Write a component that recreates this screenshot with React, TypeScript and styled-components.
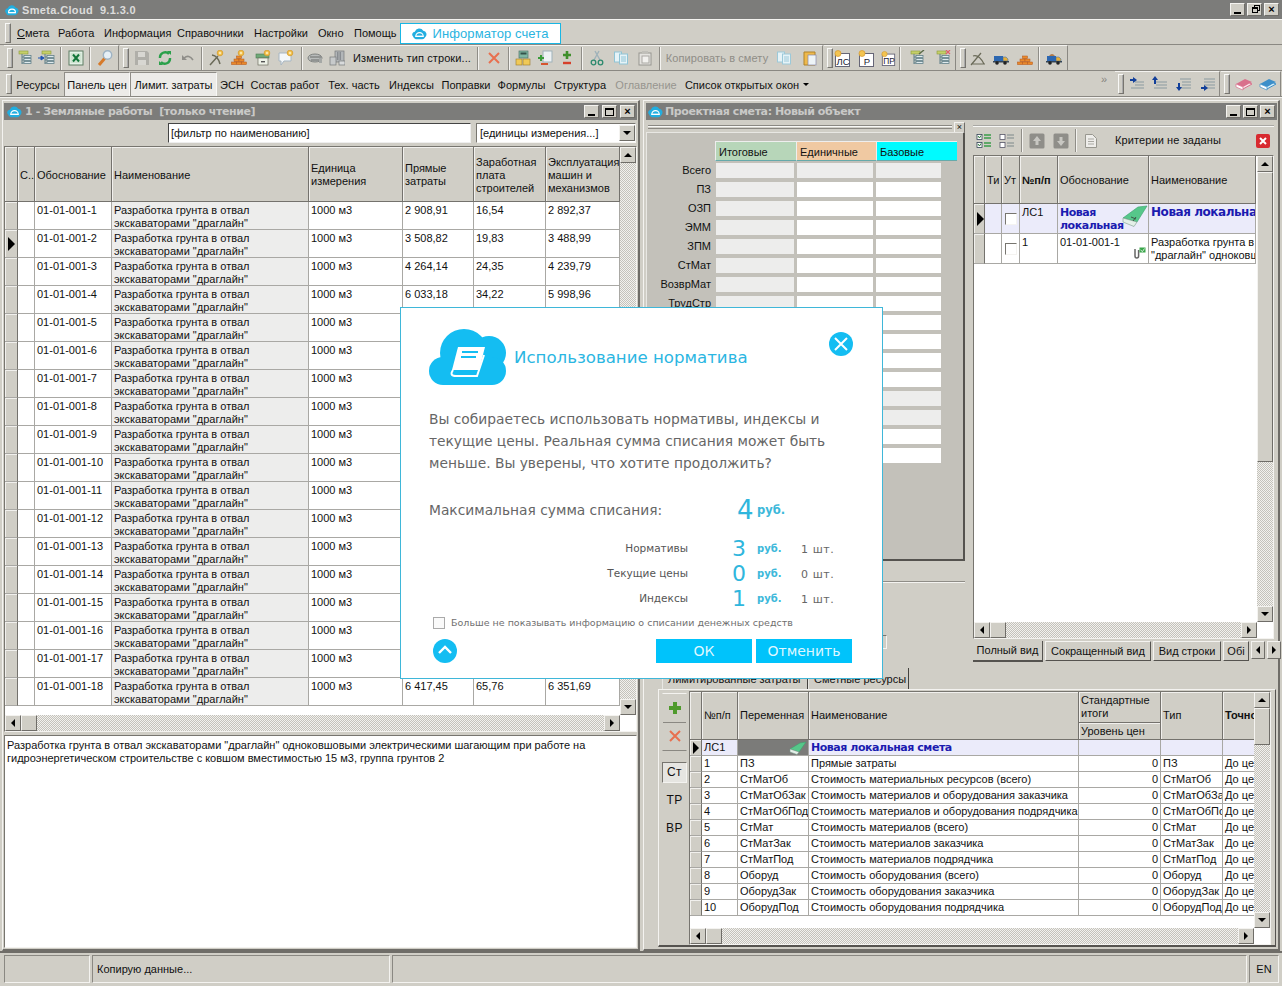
import * as React from "react";
import styled, { createGlobalStyle, css } from "styled-components";

const UI_FONT = `"Liberation Sans", Arial, sans-serif`;
const DIALOG_FONT = `"DejaVu Sans", Verdana, sans-serif`;
const FACE = "#d0cec6";
const DITHER = css`
	background-color: #f2f1ee;
	background-image: repeating-conic-gradient(#c4c2bb 0 25%, transparent 0 50%);
	background-size: 2px 2px;
`;
const raised = css`
	border: 1px solid;
	border-color: #f4f3f0 #6f6d68 #6f6d68 #f4f3f0;
`;
const sunken = css`
	border: 1px solid;
	border-color: #77756f #f4f3f0 #f4f3f0 #77756f;
`;

const GlobalStyle = createGlobalStyle`
	html, body { margin: 0; padding: 0; background: ${FACE}; }
	* { box-sizing: border-box; }
`;

const Screen = styled.div`
	width: 1282px;
	height: 986px;
	position: relative;
	overflow: hidden;
	display: flex;
	flex-direction: column;
	background: ${FACE};
	font: 11px/13px ${UI_FONT};
	color: #111;
`;

/* title bars */
const AppTitle = styled.div`
	height: 19px;
	flex: none;
	background: #7c7c7a;
	display: flex;
	align-items: center;
	padding: 0 3px 0 5px;
	gap: 3px;
	color: #dcdcdc;
	font: bold 11px ${UI_FONT};
`;
const AppTitleText = styled.span`
	flex: 1;
	white-space: pre;
	letter-spacing: 0.35px;
`;
const CaptionButtons = styled.div`
	display: flex;
	gap: 2px;
`;
const CaptionButton = styled.div`
	width: 15px;
	height: 13px;
	background: ${FACE};
	${raised};
	display: flex;
	align-items: center;
	justify-content: center;
	color: #000;
	font: bold 11px/11px ${UI_FONT};
`;
const MinGlyph = styled.span`
	width: 7px;
	height: 2px;
	background: #000;
	margin-top: 6px;
`;
const MaxGlyph = styled.span`
	width: 9px;
	height: 8px;
	border: 1px solid #000;
	border-top-width: 2px;
`;
const RestoreGlyph = styled(MaxGlyph)`
	width: 6px;
	height: 6px;
	box-shadow: 2px -2px 0 -1px ${FACE}, 2px -2px 0 0 #000;
`;

const WinCaption = styled.div`
	height: 17px;
	flex: none;
	background: #7c7c7a;
	display: flex;
	align-items: center;
	gap: 2px;
	padding: 0 2px;
	color: #c9c9c7;
	font: bold 11px ${DIALOG_FONT};
`;
const LeftCaption = styled(WinCaption)`
	padding-left: 3px;
	gap: 3px;
`;
const WinCaptionText = styled.span`
	flex: 1;
	white-space: pre;
	letter-spacing: -0.4px;
`;

/* menu and toolbars */
const MenuBar = styled.div`
	height: 26px;
	flex: none;
	display: flex;
	align-items: center;
	border-top: 1px solid #f4f3f0;
	border-bottom: 1px solid #8a8882;
	padding: 2px 0 0 5px;
`;
const Grip = styled.div`
	width: 6px;
	height: 20px;
	flex: none;
	border: 1px solid;
	border-color: #f8f8f6 #77756f #77756f #f8f8f6;
	outline: 0;
	box-shadow: inset 1px 0 0 ${FACE}, inset -1px 0 0 #aaa;
`;
const MenuItem = styled.span`
	margin-left: 6px;
	margin-right: 4px;
	width: ${(p: { $w: number }) => p.$w}px;
	white-space: nowrap;
	flex: none;
`;
const Underlined = styled.span`
	text-decoration: underline;
`;
const Informer = styled.div`
	width: 161px;
	height: 21px;
	margin-left: 2px;
	flex: none;
	display: flex;
	align-items: center;
	justify-content: center;
	gap: 5px;
	background: #fff;
	border: 1px solid #19b6e4;
	color: #2ab4df;
	font: 13px ${UI_FONT};
	letter-spacing: 0.1px;
`;
const ToolRow = styled.div`
	height: 26px;
	flex: none;
	display: flex;
	padding-left: ${(p: { $pad?: number }) => p.$pad ?? 4}px;
	border-bottom: 1px solid #8a8882;
`;
const Band = styled.div<{ $at?: number }>`
	display: flex;
	align-items: center;
	height: 25px;
	flex: none;
	margin-right: 1px;
	border-top: 1px solid #f4f3f0;
	border-right: 1px solid #8a8882;
	margin-left: ${(p) => p.$at ?? 0}px;
`;
const Slot = styled.div<{ $w: number }>`
	width: ${(p) => p.$w}px;
	flex: none;
	display: flex;
	align-items: center;
	justify-content: center;
`;
const BandGrip = styled(Grip)`
	margin-right: auto;
	margin-left: 3px;
`;
const Divider = styled.div`
	width: 2px;
	height: 23px;
	border-left: 1px solid #8f8d87;
	border-right: 1px solid #f4f3f0;
`;
const ToolText = styled.span<{ $dim?: boolean }>`
	white-space: nowrap;
	color: ${(p) => (p.$dim ? "#8f8d87" : "#111")};
	letter-spacing: 0.1px;
`;
const LinkButton = styled.div<{ $w: number; $pressed?: boolean; $dim?: boolean }>`
	width: ${(p) => p.$w}px;
	height: 24px;
	margin-top: 1px;
	padding-top: 2px;
	flex: none;
	display: flex;
	align-items: center;
	justify-content: center;
	gap: 4px;
	white-space: nowrap;
	color: ${(p) => (p.$dim ? "#97958f" : "#111")};
	${(p) =>
		p.$pressed &&
		css`
			background: #ecebe8;
			border-left: 1px solid #8f8d87;
			border-top: 1px solid #8f8d87;
			border-right: 1px solid #f8f8f6;
		`}
`;
const Caret = styled.span`
	width: 0;
	height: 0;
	border-left: 3px solid transparent;
	border-right: 3px solid transparent;
	border-top: 3px solid #000;
	margin-bottom: 2px;
`;
const Spacer = styled.div`
	flex: 1;
`;
const Chevron = styled.span`
	align-self: flex-start;
	margin-top: 2px;
	width: 14px;
	color: #85837d;
	font-size: 11px;
`;

/* MDI */
const Desktop = styled.div`
	height: 854px;
	flex: none;
	display: flex;
	gap: 3px;
	padding: 2px 2px 0 2px;
	border-top: 1px solid #f4f3f0;
`;
const Win = styled.div`
	flex: 1;
	min-width: 0;
	display: flex;
	flex-direction: column;
	padding: 2px 1px 1px 2px;
	${raised};
	border-width: 1px 2px 2px 1px;
`;
const LeftWin = styled(Win)`
	flex: none;
	width: 638px;
	padding-left: 1px;
`;
const FilterBar = styled.div`
	height: 26px;
	flex: none;
	display: flex;
	align-items: center;
	padding-left: 164px;
	gap: 5px;
`;
const FilterInput = styled.div`
	width: 303px;
	height: 20px;
	background: #fff;
	border: 1px solid;
	border-color: #444 #eee #eee #444;
	padding: 3px 2px 0;
	white-space: nowrap;
`;
const ComboBox = styled.div`
	width: 160px;
	height: 20px;
	background: #fff;
	${sunken};
	display: flex;
	align-items: center;
	padding-left: 3px;
	justify-content: space-between;
`;
const GridFrame = styled.div<{ $h: number }>`
	height: ${(p) => p.$h}px;
	flex: none;
	display: flex;
	flex-direction: column;
	${sunken};
	background: #fff;
`;
const GridMain = styled.div`
	flex: 1;
	min-height: 0;
	display: flex;
`;
const GridBody = styled.div`
	flex: 1;
	min-width: 0;
	overflow: hidden;
	display: flex;
	flex-direction: column;
`;
const GridRow = styled.div<{ $cols: string; $h: number }>`
	display: grid;
	grid-template-columns: ${(p) => p.$cols};
	height: ${(p) => p.$h}px;
	flex: none;
`;
const HeadCell = styled.div<{ $bold?: boolean }>`
	background: ${FACE};
	border-right: 1px solid #74726d;
	border-bottom: 1px solid #74726d;
	box-shadow: inset 1px 1px 0 #f1f0ed;
	display: flex;
	align-items: center;
	padding: 0 2px;
	white-space: pre-line;
	overflow: hidden;
	font-weight: ${(p) => (p.$bold ? "bold" : "normal")};
`;
const TallHead = styled(HeadCell)`
	padding-top: 2px;
`;
const StackHead = styled.div`
	display: grid;
	grid-template-rows: 31px 1fr;
`;
const Cell = styled.div<{ $grey?: boolean; $right?: boolean; $dark?: boolean; $lav?: boolean }>`
	background: ${(p) => (p.$dark ? "#7b7b79" : p.$grey ? "#ededec" : p.$lav ? "#ebebfa" : "#fff")};
	border-right: 1px solid #a9a8a4;
	border-bottom: 1px solid #a9a8a4;
	padding: 1px 2px;
	white-space: pre-line;
	overflow: hidden;
	position: relative;
	text-align: ${(p) => (p.$right ? "right" : "left")};
`;
const TallCell = styled(Cell)`
	padding-top: 2px;
`;
const Clip = styled.span`
	white-space: nowrap;
`;
const RowMark = styled.div`
	background: ${FACE};
	border-right: 1px solid #74726d;
	border-bottom: 1px solid #a9a8a4;
	box-shadow: inset 1px 1px 0 #f1f0ed;
	display: flex;
	align-items: center;
	padding-left: 3px;
`;
const Pointer = styled.span`
	width: 0;
	height: 0;
	border-left: 7px solid #000;
	border-top: 7px solid transparent;
	border-bottom: 7px solid transparent;
`;
const SmallPointer = styled(Pointer)`
	border-left-width: 6px;
	border-top-width: 6px;
	border-bottom-width: 6px;
`;
const BlueBold = styled.span<{ $size?: number }>`
	color: #1b1bb0;
	font: bold ${(p) => p.$size ?? 11}px/13px ${DIALOG_FONT};
	white-space: nowrap;
	letter-spacing: -0.45px;
`;
const CellBox = styled.span`
	display: block;
	width: 12px;
	height: 12px;
	margin: 7px 0 0 1px;
	background: #fff;
	${sunken};
`;
const CornerIcon = styled.span<{ $bottom?: number; $top?: number; $right?: number }>`
	position: absolute;
	right: ${(p) => p.$right ?? 1}px;
	${(p) => (p.$top !== undefined ? `top:${p.$top}px;` : `bottom:${p.$bottom ?? 0}px;`)}
	display: flex;
`;

/* scrollbars */
const VBar = styled.div`
	width: 16px;
	flex: none;
	display: flex;
	flex-direction: column;
	${DITHER};
`;
const HBar = styled.div<{ $gutter: number }>`
	height: 16px;
	flex: none;
	display: flex;
	margin-right: ${(p) => p.$gutter}px;
	${DITHER};
`;
const BarFill = styled.div`
	flex: 1;
`;
const BarButton = styled.div<{ $len?: number }>`
	background: ${FACE};
	${raised};
	flex: none;
	width: ${(p) => p.$len ?? 16}px;
	height: 16px;
	display: flex;
	align-items: center;
	justify-content: center;
`;
const BarThumb = styled.div<{ $len: number }>`
	background: ${FACE};
	${raised};
	flex: none;
	width: 16px;
	height: ${(p) => p.$len}px;
`;
const Arrow = styled.span<{ $dir: "up" | "down" | "left" | "right" }>`
	width: 0;
	height: 0;
	${(p) =>
		p.$dir === "up"
			? "border-left:4px solid transparent;border-right:4px solid transparent;border-bottom:4px solid #000;"
			: p.$dir === "down"
				? "border-left:4px solid transparent;border-right:4px solid transparent;border-top:4px solid #000;"
				: p.$dir === "left"
					? "border-top:4px solid transparent;border-bottom:4px solid transparent;border-right:4px solid #000;"
					: "border-top:4px solid transparent;border-bottom:4px solid transparent;border-left:4px solid #000;"}
`;

const Memo = styled.div`
	flex: 1;
	margin-top: 3px;
	background: #fff;
	${sunken};
	padding: 3px 2px;
	line-height: 13px;
`;

/* right window */
const RightBody = styled.div`
	flex: 1;
	min-height: 0;
	display: flex;
	flex-direction: column;
	padding-top: 2px;
`;
const TopSplit = styled.div`
	height: 539px;
	flex: none;
	display: flex;
	gap: 8px;
`;
const SummaryColumn = styled.div`
	width: 319px;
	flex: none;
	display: flex;
	flex-direction: column;
`;
const DockHead = styled.div`
	height: 10px;
	flex: none;
	display: flex;
	align-items: center;
	gap: 2px;
	padding-left: 2px;
`;
const DockLines = styled.div`
	flex: 1;
	height: 4px;
	border-top: 1px solid #8a8882;
	border-bottom: 1px solid #8a8882;
	box-shadow: inset 0 1px 0 #f8f8f6;
`;
const DockClose = styled.div`
	width: 11px;
	height: 11px;
	${raised};
	display: flex;
	align-items: center;
	justify-content: center;
	font-size: 9px;
	line-height: 9px;
`;
const SummaryPanel = styled.div`
	height: 429px;
	flex: none;
	background: #c3c1ba;
	border: 1px solid;
	border-color: #e8e7e3 #55534f #55534f #e8e7e3;
	border-width: 1px 2px 2px 1px;
	padding: 8px 0 0 69px;
`;
const SummaryHead = styled.div`
	display: grid;
	grid-template-columns: 81px 80px 81px;
	height: 20px;
	margin: 0 0 2px -1px;
`;
const ColumnTitle = styled.div<{ $bg: string }>`
	background: ${(p) => p.$bg};
	border-bottom: 1px solid #6aa;
	border-left: 1px solid #eee;
	border-top: 1px solid #eee;
	padding: 4px 3px 0;
`;
const SummaryRow = styled.div`
	display: grid;
	grid-template-columns: 67px 78px 76px 65px;
	column-gap: 3px;
	height: 19px;
	margin-left: -70px;
	align-items: start;
`;
const SummaryLabel = styled.div`
	text-align: right;
	line-height: 15px;
	padding-right: 2px;
`;
const SummaryField = styled.div<{ $grey?: boolean }>`
	height: 15px;
	background: ${(p) => (p.$grey ? "#ededec" : "#fff")};
`;
const SummaryFoot = styled.div`
	flex: 1;
	margin-top: 2px;
	display: flex;
	flex-direction: column;
	align-items: flex-end;
`;
const FootLine = styled.div`
	width: 100%;
	height: 2px;
	margin-top: 18px;
	border-top: 1px solid #8f8d87;
	border-bottom: 1px solid #f4f3f0;
`;
const FootBox = styled.div`
	width: 80px;
	height: 14px;
	margin-top: 52px;
	margin-right: 78px;
	${sunken};
`;
const StructureColumn = styled.div`
	flex: 1;
	min-width: 0;
	display: flex;
	flex-direction: column;
	padding-top: 3px;
	padding-right: 3px;
`;
const FilterTools = styled.div`
	height: 30px;
	flex: none;
	display: flex;
	align-items: center;
	border-top: 1px solid #a9a8a4;
	box-shadow: inset 0 1px 0 #f8f8f6;
`;
const TabStrip = styled.div`
	height: 24px;
	flex: none;
	display: flex;
	align-items: flex-start;
	padding-top: 2px;
`;
const ViewTab = styled.div<{ $w: number; $active?: boolean }>`
	width: ${(p) => p.$w}px;
	flex: none;
	height: ${(p) => (p.$active ? 21 : 20)}px;
	display: flex;
	align-items: center;
	justify-content: center;
	margin-right: 2px;
	white-space: nowrap;
	overflow: hidden;
	${(p) =>
		p.$active
			? "border-bottom:2px solid #55534f;border-right:1px solid #55534f;"
			: "border:1px solid;border-color:#f4f3f0 #55534f #55534f #f4f3f0;"}
`;
const TabArrow = styled(BarButton)`
	width: 14px;
	height: 18px;
	margin-right: 2px;
`;
const BottomPart = styled.div`
	flex: 1;
	min-height: 0;
	display: flex;
	flex-direction: column;
	padding: 7px 1px 0 12px;
`;
const SheetTabs = styled.div`
	height: 21px;
	flex: none;
	display: flex;
	padding-left: 4px;
`;
const SheetTab = styled.div<{ $w: number }>`
	width: ${(p) => p.$w}px;
	flex: none;
	padding: 5px 3px 0 5px;
	white-space: nowrap;
	border-right: 1px solid #44423e;
	border-left: 1px solid #e8e7e3;
	overflow: hidden;
`;
const SheetBody = styled.div`
	height: 258px;
	flex: none;
	display: flex;
	padding: 1px 4px 0 3px;
	border: 1px solid;
	border-color: #f4f3f0 #55534f #55534f #f4f3f0;
	border-width: 1px 1px 2px 1px;
`;
const SideBar = styled.div`
	width: 27px;
	flex: none;
	display: flex;
	flex-direction: column;
	align-items: center;
	font-size: 12px;
`;
const SideButtons = styled.div`
	width: 25px;
	height: 58px;
	flex: none;
	display: flex;
	flex-direction: column;
	margin: 2px 2px 0 0;
	border: 1px solid;
	border-color: #f4f3f0 transparent #8a8882 transparent;
`;
const SideButton = styled.div`
	flex: 1;
	display: flex;
	align-items: center;
	justify-content: center;
	&:first-child {
		border-bottom: 1px solid #8a8882;
	}
`;
const SideTab = styled.div<{ $on?: boolean }>`
	width: 25px;
	height: ${(p) => (p.$on ? 21 : 28)}px;
	margin: ${(p) => (p.$on ? "11px 2px 0 0" : "0 2px 0 0")};
	display: flex;
	align-items: center;
	justify-content: center;
	letter-spacing: 0.4px;
	${(p) => p.$on && "background:#e6e5e1;border:1px solid;border-color:#77756f #f4f3f0 #f4f3f0 #77756f;"}
	${(p) => !p.$on && "padding-top:6px;"}
`;
const RatesFrame = styled.div`
	flex: 1;
	min-width: 0;
	height: 254px;
	display: flex;
	flex-direction: column;
	background: #fff;
	${sunken};
`;

/* status bar */
const StatusBar = styled.div`
	flex: 1;
	display: flex;
	gap: 2px;
	padding: 2px 3px 3px 4px;
	border-top: 2px solid #6f6d68;
`;
const StatusPane = styled.div<{ $w?: number; $center?: boolean }>`
	${(p) => (p.$w ? `width:${p.$w}px;flex:none;` : "flex:1;")}
	${sunken};
	border-color: #8a8882 #f4f3f0 #f4f3f0 #8a8882;
	display: flex;
	align-items: center;
	padding-left: 4px;
	${(p) => p.$center && "justify-content:center;padding-left:0;"}
`;

/* dialog */
const Dialog = styled.div`
	position: absolute;
	left: 400px;
	top: 307px;
	width: 483px;
	height: 372px;
	background: #fff;
	border: 1px solid #3fb7d9;
	padding: 21px 30px 0 28px;
	display: flex;
	flex-direction: column;
	font-family: ${DIALOG_FONT};
	color: #666;
	z-index: 5;
`;
const DialogHead = styled.div`
	height: 57px;
	flex: none;
	display: flex;
	align-items: center;
	gap: 7px;
`;
const DialogTitle = styled.div`
	flex: 1;
	color: #2bb6e2;
	font-size: 16.6px;
`;
const RoundButton = styled.div<{ $shift?: number; $edge?: number }>`
	width: 24px;
	height: 24px;
	flex: none;
	border-radius: 50%;
	background: #14bdf2;
	display: flex;
	align-items: center;
	justify-content: center;
	margin-top: ${(p) => p.$shift ?? 0}px;
	margin-right: ${(p) => p.$edge ?? 0}px;
`;
const DialogText = styled.div`
	margin-top: 22px;
	font-size: 13.8px;
	line-height: 22px;
	white-space: pre-line;
`;
const TotalRow = styled.div`
	margin-top: 21px;
	height: 30px;
	display: grid;
	grid-template-columns: 308px 20px auto;
	align-items: center;
	font-size: 13.8px;
`;
const BigNumber = styled.span<{ $size: number }>`
	color: #2fb6dd;
	font-size: ${(p) => p.$size}px;
	line-height: 24px;
`;
const BreakNumber = styled(BigNumber)`
	text-align: right;
`;
const Rub = styled.span<{ $size: number }>`
	color: #3cb8da;
	font-size: ${(p) => p.$size}px;
	font-weight: bold;
`;
const BreakRub = styled(Rub)`
	padding-left: 11px;
`;
const Breakdown = styled.div`
	margin-top: 11px;
	display: flex;
	flex-direction: column;
`;
const BreakRow = styled.div`
	height: 25px;
	display: grid;
	grid-template-columns: 259px 58px 55px auto;
	align-items: center;
	font-size: 11px;
`;
const BreakLabel = styled.span`
	text-align: right;
	font-size: 10.5px;
	font-weight: 500;
	color: #555;
`;
const BreakCount = styled.span`
	letter-spacing: 0.6px;
	margin-top: 2px;
`;
const CheckLine = styled.div`
	margin-top: 3px;
	display: flex;
	align-items: center;
	gap: 6px;
	padding-left: 4px;
	font-size: 9.5px;
	color: #6f6f6f;
	height: 17px;
	white-space: nowrap;
`;
const CheckBox = styled.span`
	width: 12px;
	height: 12px;
	flex: none;
	border: 1px solid #aaa;
	background: #fafafa;
`;
const DialogFoot = styled.div`
	margin-top: 8px;
	display: flex;
	align-items: center;
	padding-left: 4px;
	gap: 4px;
`;
const FootGap = styled.div`
	flex: 1;
`;
const DialogButton = styled.div`
	width: 96px;
	height: 24px;
	background: #00c3fb;
	color: #dff7ff;
	display: flex;
	align-items: center;
	justify-content: center;
	font-size: 14px;
`;

/* icons */
const Svg: React.FC<{ size?: number; w?: number; children: React.ReactNode }> = ({ size = 16, w, children }) => (
	<svg width={w ?? size} height={size} viewBox={`0 0 ${w ?? size} ${size}`} style={{ display: "block" }}>
		{children}
	</svg>
);
const Star = ({ x = 11, y = 3 }: { x?: number; y?: number }) => (
	<g>
		<circle cx={x} cy={y} r={2.8} fill="#f3c451" stroke="#d59a2c" strokeWidth="0.8" />
		<circle cx={x} cy={y} r={0.9} fill="#fff6d5" />
	</g>
);
const TreeBase = () => (
	<g>
		<rect x="2" y="1" width="9" height="3" fill="#c5cf6a" stroke="#8b9a3a" strokeWidth="0.6" />
		<path d="M5 4v10M5 7h2M5 10h2M5 13h2" stroke="#5f7f88" fill="none" />
		<g fill="#dfeaee" stroke="#5f7f88" strokeWidth="0.8">
			<rect x="7" y="5.5" width="7" height="2" />
			<rect x="7" y="8.5" width="7" height="2" />
			<rect x="7" y="11.5" width="7" height="2" />
		</g>
	</g>
);
const Brick = ({ x, y, c = "#e98a2c" }: { x: number; y: number; c?: string }) => (
	<rect x={x} y={y} width="5" height="2.6" fill={c} stroke="#b4541a" strokeWidth="0.5" />
);
const Bricks = () => (
	<g>
		<Brick x={5.5} y={6} />
		<Brick x={3} y={9} />
		<Brick x={8} y={9} />
		<Brick x={0.5} y={12} />
		<Brick x={5.5} y={12} />
		<Brick x={10.5} y={12} />
	</g>
);
const Truck = ({ load }: { load?: boolean }) => (
	<g>
		{load && <path d="M3 6q3-4 6 0z" fill="#b07a4a" />}
		<rect x="1" y="6" width="9" height="5" fill="#2d67b0" />
		<path d="M10 7h3l2 2v2h-5z" fill="#e8b03a" stroke="#2d67b0" strokeWidth="0.5" />
		<rect x="0" y="11" width="16" height="1.5" fill="#345" />
		<circle cx="4" cy="13" r="1.8" fill="#222" />
		<circle cx="12" cy="13" r="1.8" fill="#222" />
	</g>
);
const Pages = ({ c = "#8fc4d6" }: { c?: string }) => (
	<g>
		<rect x="1.5" y="2" width="7" height="10" fill="#e6f3f7" stroke={c} />
		<rect x="6.5" y="4" width="8" height="10" fill="#e6f3f7" stroke={c} />
		<path d="M8 7h5M8 9h5M8 11h5" stroke={c} />
	</g>
);
const TagDoc = ({ text }: { text: string }) => (
	<svg width="17" height="17" viewBox="0 0 17 17" style={{ display: "block" }}>
		<rect x="1.5" y="3.5" width="14" height="13" fill="#fff" stroke="#667" />
		<circle cx="4" cy="3.5" r="3" fill="#f3c451" stroke="#d59a2c" strokeWidth="0.7" />
		<text x="9" y="14.5" textAnchor="middle" fontFamily={UI_FONT} fontSize="9.5" fill="#223">
			{text}
		</text>
	</svg>
);
const Indent = ({ mode }: { mode: number }) => (
	<Svg>
		<g stroke="#8a9aa0" strokeWidth="1">
			<line x1={mode % 2 ? 4 : 6} x2="15" y1="6" y2="6" />
			<line x1={mode % 2 ? 4 : 6} x2="15" y1="9" y2="9" />
			<line x1={mode < 2 ? 2 : 4} x2="15" y1="12" y2="12" />
			<line x1={mode < 2 ? 2 : 4} x2="15" y1="3" y2="3" opacity={mode < 2 ? 0 : 1} />
		</g>
		<g stroke="#123f9a" strokeWidth="2" fill="none">
			{mode === 0 && <path d="M1 4h5" />}
			{mode === 1 && <path d="M3 8V3" />}
			{mode === 2 && <path d="M3 7v5" />}
			{mode === 3 && <path d="M1 12h4" />}
		</g>
		<g fill="#123f9a">
			{mode === 0 && <path d="M4 1l4 3-4 3z" />}
			{mode === 1 && <path d="M3 0l3 4H0z" />}
			{mode === 2 && <path d="M3 15l3-4H0z" />}
			{mode === 3 && <path d="M4 9l4 3-4 3z" />}
		</g>
	</Svg>
);
const Book = ({ cover, page }: { cover: string; page: string }) => (
	<Svg w={18}>
		<path d="M1 10l9-5 7 3-9 5z" fill={page} stroke={cover} />
		<path d="M1 8l9-5 7 3-9 5z" fill={cover} />
		<path d="M1 8v3l7 3v-3z" fill="#fff" stroke={cover} strokeWidth="0.7" />
	</Svg>
);
const NoteGreen = () => (
	<Svg size={23} w={26}>
		<path d="M1 13L16 2l9-1-10 16z" fill="#56c78a" stroke="#38a06a" strokeWidth="0.6" />
		<path d="M1 13l14 4-3 4.5L1 17z" fill="#e4efe8" stroke="#7a9a8a" strokeWidth="0.6" />
		<path d="M9 12l5 2M11 16l3-4" stroke="#3a4a40" strokeWidth="0.9" />
	</Svg>
);
const SmallNote = () => (
	<Svg size={14} w={18}>
		<path d="M1 8l10-6 6-1-7 10z" fill="#56c78a" stroke="#38a06a" strokeWidth="0.5" />
		<path d="M1 8l9 3-2 2.5L1 11z" fill="#e4efe8" stroke="#7a9a8a" strokeWidth="0.5" />
	</Svg>
);

const ICONS: Record<string, React.ReactNode> = {
	tree: (
		<Svg>
			<TreeBase />
		</Svg>
	),
	treeAdd: (
		<Svg w={18}>
			<g transform="translate(2 0)">
				<TreeBase />
			</g>
			<path d="M0 8h4M3 6l3 2-3 2z" stroke="#1f55b5" fill="#1f55b5" />
		</Svg>
	),
	excel: (
		<Svg>
			<rect x="1" y="1" width="14" height="14" fill="#e6f2e8" stroke="#5d7c63" />
			<rect x="2.5" y="3" width="11" height="10" fill="#cfe4d1" />
			<path d="M5 4.5l6 7M11 4.5l-6 7" stroke="#14763a" strokeWidth="2" />
		</Svg>
	),
	loupe: (
		<Svg>
			<line x1="8" y1="8" x2="2" y2="15" stroke="#d67a2a" strokeWidth="3" />
			<circle cx="10.5" cy="5" r="4.2" fill="#e6eff6" stroke="#9eb3c4" strokeWidth="1.4" />
		</Svg>
	),
	save: (
		<Svg>
			<path d="M1 1h12l2 2v12H1z" fill="#b0afa9" />
			<rect x="4" y="2" width="7" height="5" fill="#d8d7d2" />
			<rect x="4" y="10" width="8" height="5" fill="#d8d7d2" />
		</Svg>
	),
	refresh: (
		<Svg>
			<path d="M12 4a5.2 5.2 0 0 0-9 4" fill="none" stroke="#2aa04a" strokeWidth="2.4" />
			<path d="M4 12a5.2 5.2 0 0 0 9-4" fill="none" stroke="#2aa04a" strokeWidth="2.4" />
			<path d="M10 1l4 0v4zM6 15H2v-4z" fill="#2aa04a" />
		</Svg>
	),
	undo: (
		<Svg>
			<path d="M4 8q5-4 9 2" fill="none" stroke="#8f8e89" strokeWidth="1.6" />
			<path d="M2 5v5h5z" fill="#8f8e89" />
		</Svg>
	),
	pick: (
		<Svg>
			<path d="M2 15L10 6M4 5q6 1 8 9" stroke="#6a6a58" strokeWidth="1.5" fill="none" />
			<Star x={12} y={3} />
		</Svg>
	),
	bricks: (
		<Svg>
			<Bricks />
			<Star x={10} y={3} />
		</Svg>
	),
	box: (
		<Svg>
			<rect x="1" y="4" width="13" height="4" fill="#6fa878" stroke="#4a7c52" strokeWidth="0.6" />
			<rect x="3" y="8" width="10" height="7" fill="#eef2e8" stroke="#6d6d5f" strokeWidth="0.7" />
			<rect x="6" y="11" width="4" height="1.4" fill="#555" />
			<Star x={12} y={3} />
		</Svg>
	),
	bubble: (
		<Svg>
			<path d="M1 3h12v8H6l-3 4v-4H1z" fill="#f4f7f9" stroke="#a7b6c2" />
			<Star x={12} y={3} />
		</Svg>
	),
	printer: (
		<Svg>
			<ellipse cx="8" cy="8" rx="7" ry="4" fill="#b9bcbb" stroke="#7e817f" />
			<path d="M3 7h11M4 10h8" stroke="#6a6d6b" />
			<rect x="12" y="8" width="3" height="5" fill="#a5a8a6" />
		</Svg>
	),
	building: (
		<Svg>
			<rect x="6" y="1" width="9" height="11" fill="#b2b6b8" stroke="#77797a" strokeWidth="0.7" />
			<rect x="1" y="7" width="6" height="8" fill="#c7cacb" stroke="#77797a" strokeWidth="0.7" />
			<rect x="10" y="11" width="6" height="4" fill="#d8dadb" stroke="#77797a" strokeWidth="0.7" />
			<path d="M8 3h5M8 5h5M8 7h5M8 9h5" stroke="#60646a" strokeDasharray="1.5 1" />
		</Svg>
	),
	cross: (
		<Svg>
			<path d="M3 3l10 10M13 3L3 13" stroke="#e8704f" strokeWidth="2" />
		</Svg>
	),
	calc: (
		<Svg>
			<rect x="4" y="1" width="9" height="7" fill="#7fb6a2" stroke="#52756a" strokeWidth="0.7" />
			<rect x="5.5" y="2.5" width="6" height="2" fill="#33524a" />
			<g fill="#f0c957" stroke="#9a7a2a" strokeWidth="0.6">
				<rect x="1" y="9" width="6" height="6" />
				<rect x="8" y="9" width="7" height="6" />
			</g>
		</Svg>
	),
	addSub: (
		<Svg>
			<rect x="5" y="1" width="9" height="11" fill="#eef2f4" stroke="#9fb2ba" />
			<path d="M0 8h6M3 5v6" stroke="#3a9c3a" strokeWidth="2" />
			<path d="M3 14h7" stroke="#d6552e" strokeWidth="2" />
		</Svg>
	),
	plusMinus: (
		<Svg>
			<path d="M3 5h8M7 1v8" stroke="#3f8f2c" strokeWidth="2.6" />
			<path d="M3 13h8" stroke="#d6402a" strokeWidth="2.4" />
		</Svg>
	),
	scissors: (
		<Svg>
			<path d="M10 1L5 10M6 1l5 9" stroke="#9fb2ba" strokeWidth="1.4" />
			<circle cx="4.5" cy="12.5" r="2.3" fill="none" stroke="#2d8a6e" strokeWidth="1.3" />
			<circle cx="11.5" cy="12.5" r="2.3" fill="none" stroke="#2d8a6e" strokeWidth="1.3" />
		</Svg>
	),
	copy: (
		<Svg>
			<Pages />
		</Svg>
	),
	paste: (
		<Svg>
			<rect x="2" y="3" width="12" height="12" fill="#e4e3df" stroke="#96958f" />
			<rect x="5" y="1" width="6" height="3" fill="#c0bfb9" />
			<rect x="5" y="6" width="7" height="7" fill="#f2f1ee" stroke="#a9a8a3" />
		</Svg>
	),
	copyBlue: (
		<Svg>
			<Pages c="#9cc9d9" />
		</Svg>
	),
	pasteGold: (
		<Svg>
			<path d="M2 2h11v13H2z" fill="#eeb94b" stroke="#b0832a" />
			<rect x="6" y="5" width="8" height="10" fill="#eef4f7" stroke="#88a" strokeWidth="0.7" />
		</Svg>
	),
	ls: <TagDoc text="ЛС" />,
	r: <TagDoc text="Р" />,
	pr: <TagDoc text="ПР" />,
	treeCheck: (
		<Svg>
			<TreeBase />
			<path d="M10 4l5-4" stroke="#5a6a4a" strokeWidth="1.4" />
		</Svg>
	),
	treeX: (
		<Svg>
			<TreeBase />
			<path d="M11 0l4 4M15 0l-4 4" stroke="#e0606a" strokeWidth="1.2" />
		</Svg>
	),
	hammer: (
		<Svg>
			<path d="M1 15L11 3M3 6q6-2 11 8M1 14h14" stroke="#6a6a58" strokeWidth="1.2" fill="none" />
		</Svg>
	),
	truck: (
		<Svg>
			<Truck />
		</Svg>
	),
	bricksPlain: (
		<Svg>
			<Bricks />
		</Svg>
	),
	truckLoaded: (
		<Svg>
			<Truck load />
		</Svg>
	),
	in0: <Indent mode={0} />,
	in1: <Indent mode={1} />,
	in2: <Indent mode={2} />,
	in3: <Indent mode={3} />,
	bookPink: <Book cover="#d9708c" page="#fbe2ea" />,
	bookBlue: <Book cover="#3d8fc9" page="#d6f0fb" />,
	listCheck: (
		<Svg>
			<g fill="#fff" stroke="#345" strokeWidth="0.8">
				<rect x="1" y="1.5" width="5" height="5" />
				<rect x="1" y="9.5" width="5" height="5" />
			</g>
			<path d="M8 2h7M8 5h7M8 10h7M8 13h7" stroke="#3a9c4a" strokeWidth="1.4" />
			<path d="M2 3l1.5 2L5 2.5M2 11l1.5 2L5 10.5" stroke="#2a7a3a" fill="none" />
		</Svg>
	),
	listEmpty: (
		<Svg>
			<g fill="#fff" stroke="#556" strokeWidth="0.8">
				<rect x="1" y="1.5" width="5" height="5" />
				<rect x="1" y="9.5" width="5" height="5" />
			</g>
			<path d="M8 2h7M8 5h7M8 10h7M8 13h7" stroke="#98a09e" strokeWidth="1.3" />
		</Svg>
	),
	moveUp: (
		<Svg>
			<rect x="0.5" y="0.5" width="15" height="15" rx="1.5" fill="#8f8e89" />
			<path d="M8 3l4 5H9.5v4h-3V8H4z" fill="#c8c7c2" />
		</Svg>
	),
	moveDown: (
		<Svg>
			<rect x="0.5" y="0.5" width="15" height="15" rx="1.5" fill="#8f8e89" />
			<path d="M8 13l4-5H9.5V4h-3v4H4z" fill="#c8c7c2" />
		</Svg>
	),
	doc: (
		<Svg>
			<path d="M2.5 1.5h7l4 4v9h-11z" fill="#eeedea" stroke="#98978f" />
			<path d="M5 6h6M5 8.5h6M5 11h6" stroke="#a9a8a2" />
		</Svg>
	),
	redClose: (
		<Svg>
			<rect x="1" y="1" width="14" height="14" rx="2" fill="#d82a30" />
			<path d="M5 5l6 6M11 5l-6 6" stroke="#fff" strokeWidth="2" />
		</Svg>
	),
	plus: (
		<Svg>
			<path d="M8 2v12M2 8h12" stroke="#4f9a2c" strokeWidth="4" />
		</Svg>
	),
	clipMark: (
		<Svg size={12} w={14}>
			<path d="M2 2v7q0 2 1.8 2t1.8-2V3" fill="none" stroke="#666" strokeWidth="1.5" />
			<rect x="6.5" y="0.5" width="6" height="5" fill="#3aa64a" />
			<path d="M7.5 3l2 1.5 2-3" stroke="#fff" fill="none" strokeWidth="0.8" />
		</Svg>
	),
};

type ToolItem = { kind: "grip" | "sep" | "icon" | "text"; w: number; name?: string; label?: string; dim?: boolean };
const g = (w = 10): ToolItem => ({ kind: "grip", w });
const s = (w: number): ToolItem => ({ kind: "sep", w });
const i = (name: string, w: number): ToolItem => ({ kind: "icon", name, w });
const t = (label: string, w: number, dim?: boolean): ToolItem => ({ kind: "text", label, w, dim });

const BAND_1 = [g(), i("tree", 21), i("treeAdd", 23), s(6), i("excel", 24), s(4), i("loupe", 26)];
const BAND_2 = [
	g(11), i("save", 21), i("refresh", 25), i("undo", 22), s(6), i("pick", 22), i("bricks", 24), i("box", 23),
	i("bubble", 24), s(7), i("printer", 20), i("building", 24), t("Изменить тип строки...", 126), s(6),
	i("cross", 25), s(5), i("calc", 23), i("addSub", 23), i("plusMinus", 22), s(6), i("scissors", 24),
	i("copy", 24), i("paste", 24), s(6), t("Копировать в смету", 108, true), i("copyBlue", 26), i("pasteGold", 25),
];
const BAND_3 = [g(), i("ls", 17), i("r", 30), i("pr", 15), s(8), i("treeCheck", 26), i("treeX", 25)];
const BAND_4 = [g(), i("hammer", 22), i("truck", 24), i("bricksPlain", 24), s(3), i("truckLoaded", 27)];
const BAND_5 = [g(), i("in0", 23), i("in1", 24), i("in2", 24), i("in3", 23)];
const BAND_6 = [g(12), i("bookPink", 22), i("bookBlue", 25)];

const ToolBand: React.FC<{ items: ToolItem[] }> = ({ items }) => (
	<Band>
		{items.map((it, idx) => (
			<Slot key={idx} $w={it.w}>
				{it.kind === "grip" && <BandGrip />}
				{it.kind === "sep" && <Divider />}
				{it.kind === "icon" && ICONS[it.name!]}
				{it.kind === "text" && <ToolText $dim={it.dim}>{it.label}</ToolText>}
			</Slot>
		))}
	</Band>
);

const MENU: [string, number][] = [
	["Работа", 36],
	["Информация", 63],
	["Справочники", 67],
	["Настройки", 54],
	["Окно", 26],
	["Помощь", 40],
];
const LINKS: [string, number, boolean?, boolean?][] = [
	["Ресурсы", 52],
	["Панель цен", 66, true],
	["Лимит. затраты", 87, true],
	["ЭСН", 30],
	["Состав работ", 76],
	["Тех. часть", 62],
	["Индексы", 53],
	["Поправки", 56],
	["Формулы", 55],
	["Структура", 62],
	["Оглавление", 70, false, true],
];

const WORK_NAME = `Разработка грунта в отвал\nэкскаваторами "драглайн"`;
const WORKS: { code: string; prices: string[] }[] = [
	{ code: "01-01-001-1", prices: ["2 908,91", "16,54", "2 892,37"] },
	{ code: "01-01-001-2", prices: ["3 508,82", "19,83", "3 488,99"] },
	{ code: "01-01-001-3", prices: ["4 264,14", "24,35", "4 239,79"] },
	{ code: "01-01-001-4", prices: ["6 033,18", "34,22", "5 998,96"] },
	...[5, 6, 7, 8, 9, 10, 11, 12, 13, 14, 15, 16, 17].map((n) => ({
		code: `01-01-001-${n}`,
		prices: ["", "", ""],
	})),
	{ code: "01-01-001-18", prices: ["6 417,45", "65,76", "6 351,69"] },
];
const WORK_COLS = "13px 17px 77px 197px 94px 71px 72px 74px";
const WORK_HEAD = ["", "С..", "Обоснование", "Наименование", "Единица\nизмерения", "Прямые\nзатраты", "Заработная\nплата\nстроителей", "Эксплуатация\nмашин и\nмеханизмов"];

const STRUCT_COLS = "11px 17px 18px 38px 91px 107px";
const RATE_COLS = "12px 36px 71px 270px 82px 62px 34px";
const RATES: [string, string, string][] = [
	["1", "ПЗ", "Прямые затраты"],
	["2", "СтМатОб", "Стоимость материальных ресурсов (всего)"],
	["3", "СтМатОбЗак", "Стоимость материалов и оборудования заказчика"],
	["4", "СтМатОбПод", "Стоимость материалов и оборудования подрядчика"],
	["5", "СтМат", "Стоимость материалов (всего)"],
	["6", "СтМатЗак", "Стоимость материалов заказчика"],
	["7", "СтМатПод", "Стоимость материалов подрядчика"],
	["8", "Оборуд", "Стоимость оборудования (всего)"],
	["9", "ОборудЗак", "Стоимость оборудования заказчика"],
	["10", "ОборудПод", "Стоимость оборудования подрядчика"],
];
const SUMMARY_LABELS = ["Всего", "ПЗ", "ОЗП", "ЭММ", "ЗПМ", "СтМат", "ВозврМат", "ТрудСтр", "", "", "", "", "", "", "", ""];

const CloudLogo = () => (
	<svg width="78" height="57" viewBox="0 0 78 57" style={{ display: "block" }}>
		<g fill="#14bdf2">
			<circle cx="35" cy="24" r="24" />
			<circle cx="60" cy="24" r="17" />
			<rect x="0" y="28" width="77" height="28" rx="14" />
		</g>
		<path d="M29 18h27l-6 23H23z" fill="#fff" />
		<path d="M33 23h16M32 28h15" stroke="#14bdf2" strokeWidth="2" />
		<path d="M24 41q-4 6 3 6h21l7-21" fill="none" stroke="#fff" strokeWidth="2" />
	</svg>
);
const CloudMark: React.FC<{ size: number }> = ({ size }) => (
	<svg width={size} height={size} viewBox="0 0 16 16" style={{ display: "block", flex: "none" }}>
		<path d="M1 11a3 3 0 0 1 2-5 5 5 0 0 1 9-1 4 4 0 0 1 2 7q-1 2-3 2H4q-2 0-3-3z" fill="#22aee0" />
		<path d="M4 11a4 4 0 0 1 8 0z" fill="none" stroke="#fff" strokeWidth="1.2" />
		<path d="M4 11h8" stroke="#fff" />
	</svg>
);

const ScrollH: React.FC<{ gutter?: number }> = ({ gutter = 0 }) => (
	<HBar $gutter={gutter}>
		<BarButton>
			<Arrow $dir="left" />
		</BarButton>
		<BarThumb $len={16} />
		<BarFill />
		<BarButton>
			<Arrow $dir="right" />
		</BarButton>
	</HBar>
);

const App: React.FC = () => (
	<Screen>
		<GlobalStyle />
		<AppTitle>
			<CloudMark size={14} />
			<AppTitleText>Smeta.Cloud  9.1.3.0</AppTitleText>
			<CaptionButtons>
				<CaptionButton>
					<MinGlyph />
				</CaptionButton>
				<CaptionButton>
					<RestoreGlyph />
				</CaptionButton>
				<CaptionButton>×</CaptionButton>
			</CaptionButtons>
		</AppTitle>

		<MenuBar>
			<Grip />
			<MenuItem $w={31}>
				<Underlined>С</Underlined>мета
			</MenuItem>
			{MENU.map(([label, w]) => (
				<MenuItem key={label} $w={w}>
					{label}
				</MenuItem>
			))}
			<Informer>
				<CloudMark size={15} />
				Информатор счета
			</Informer>
		</MenuBar>

		<ToolRow>
			<ToolBand items={BAND_1} />
			<ToolBand items={BAND_2} />
			<ToolBand items={BAND_3} />
			<ToolBand items={BAND_4} />
		</ToolRow>

		<ToolRow $pad={3}>
			<Slot $w={9}>
				<BandGrip />
			</Slot>
			{LINKS.map(([label, w, pressed, dim]) => (
				<LinkButton key={label} $w={w} $pressed={pressed} $dim={dim}>
					{label}
				</LinkButton>
			))}
			<LinkButton $w={132}>
				Список открытых окон
				<Caret />
			</LinkButton>
			<Spacer />
			<Chevron>»</Chevron>
			<ToolBand items={BAND_5} />
			<ToolBand items={BAND_6} />
		</ToolRow>

		<Desktop>
			<LeftWin>
				<LeftCaption>
					<CloudMark size={15} />
					<WinCaptionText>1 - Земляные работы  [только чтение]</WinCaptionText>
					<CaptionButton>
						<MinGlyph />
					</CaptionButton>
					<CaptionButton>
						<MaxGlyph />
					</CaptionButton>
					<CaptionButton>×</CaptionButton>
				</LeftCaption>
				<FilterBar>
					<FilterInput>[фильтр по наименованию]</FilterInput>
					<ComboBox>
						[единицы измерения...]
						<BarButton>
							<Arrow $dir="down" />
						</BarButton>
					</ComboBox>
				</FilterBar>
				<GridFrame $h={586}>
					<GridMain>
						<GridBody>
							<GridRow $cols={WORK_COLS} $h={55}>
								{WORK_HEAD.map((h, n) => (
									<TallHead key={n}>{h}</TallHead>
								))}
							</GridRow>
							{WORKS.map((w, n) => (
								<GridRow key={w.code} $cols={WORK_COLS} $h={28}>
									<RowMark>{n === 1 && <Pointer />}</RowMark>
									<TallCell />
									<TallCell>{w.code}</TallCell>
									<TallCell $grey>{WORK_NAME}</TallCell>
									<TallCell>1000 м3</TallCell>
									{w.prices.map((p, k) => (
										<TallCell key={k}>{p}</TallCell>
									))}
								</GridRow>
							))}
						</GridBody>
						<VBar>
							<BarButton>
								<Arrow $dir="up" />
							</BarButton>
							<BarFill />
							<BarButton>
								<Arrow $dir="down" />
							</BarButton>
						</VBar>
					</GridMain>
					<ScrollH gutter={16} />
				</GridFrame>
				<Memo>
					Разработка грунта в отвал экскаваторами "драглайн" одноковшовыми электрическими шагающим при работе на
					<br />
					гидроэнергетическом строительстве с ковшом вместимостью 15 м3, группа грунтов 2
				</Memo>
			</LeftWin>

			<Win>
				<WinCaption>
					<CloudMark size={15} />
					<WinCaptionText>Проектная смета: Новый объект</WinCaptionText>
					<CaptionButton>
						<MinGlyph />
					</CaptionButton>
					<CaptionButton>
						<MaxGlyph />
					</CaptionButton>
					<CaptionButton>×</CaptionButton>
				</WinCaption>
				<RightBody>
					<TopSplit>
						<SummaryColumn>
							<DockHead>
								<DockLines />
								<DockClose>×</DockClose>
							</DockHead>
							<SummaryPanel>
								<SummaryHead>
									<ColumnTitle $bg="#b7d6b9">Итоговые</ColumnTitle>
									<ColumnTitle $bg="#f0c9a2">Единичные</ColumnTitle>
									<ColumnTitle $bg="#00fbff">Базовые</ColumnTitle>
								</SummaryHead>
								{SUMMARY_LABELS.map((label, n) => (
									<SummaryRow key={n}>
										<SummaryLabel>{label}</SummaryLabel>
										<SummaryField $grey />
										<SummaryField $grey={n === 0 || n === 12 || n === 13} />
										<SummaryField $grey={n === 0 || n === 12 || n === 13} />
									</SummaryRow>
								))}
							</SummaryPanel>
							<SummaryFoot>
								<FootLine />
								<FootBox />
							</SummaryFoot>
						</SummaryColumn>
						<StructureColumn>
							<FilterTools>
								<Slot $w={21}>{ICONS.listCheck}</Slot>
								<Slot $w={25}>{ICONS.listEmpty}</Slot>
								<Slot $w={6}>
									<Divider />
								</Slot>
								<Slot $w={24}>{ICONS.moveUp}</Slot>
								<Slot $w={24}>{ICONS.moveDown}</Slot>
								<Slot $w={6}>
									<Divider />
								</Slot>
								<Slot $w={24}>{ICONS.doc}</Slot>
								<Slot $w={130}>
									<ToolText>Критерии не заданы</ToolText>
								</Slot>
								<Spacer />
								<Slot $w={22}>{ICONS.redClose}</Slot>
							</FilterTools>
							<GridFrame $h={484}>
								<GridMain>
									<GridBody>
										<GridRow $cols={STRUCT_COLS} $h={48}>
											<TallHead />
											<TallHead>Ти</TallHead>
											<TallHead>Ут</TallHead>
											<TallHead $bold>№п/п</TallHead>
											<TallHead>Обоснование</TallHead>
											<TallHead>Наименование</TallHead>
										</GridRow>
										<GridRow $cols={STRUCT_COLS} $h={30}>
											<RowMark>
												<Pointer />
											</RowMark>
											<TallCell $lav />
											<TallCell $lav>
												<CellBox />
											</TallCell>
											<TallCell $lav>ЛС1</TallCell>
											<TallCell $lav>
												<BlueBold>
													Новая
													<br />
													локальная
												</BlueBold>
												<CornerIcon $top={1} $right={0}>
													<NoteGreen />
												</CornerIcon>
											</TallCell>
											<TallCell $lav>
												<BlueBold $size={12}>Новая локальная смета</BlueBold>
											</TallCell>
										</GridRow>
										<GridRow $cols={STRUCT_COLS} $h={30}>
											<RowMark />
											<TallCell />
											<TallCell>
												<CellBox />
											</TallCell>
											<TallCell>1</TallCell>
											<TallCell>
												01-01-001-1
												<CornerIcon $bottom={4}>{ICONS.clipMark}</CornerIcon>
											</TallCell>
											<TallCell>
												<Clip>Разработка грунта в отвал экскаваторами</Clip>
												<br />
												<Clip>"драглайн" одноковшовыми</Clip>
											</TallCell>
										</GridRow>
									</GridBody>
									<VBar>
										<BarButton>
											<Arrow $dir="up" />
										</BarButton>
										<BarThumb $len={290} />
										<BarFill />
										<BarButton>
											<Arrow $dir="down" />
										</BarButton>
									</VBar>
								</GridMain>
								<ScrollH gutter={16} />
							</GridFrame>
							<TabStrip>
								<ViewTab $w={70} $active>
									Полный вид
								</ViewTab>
								<ViewTab $w={106}>Сокращенный вид</ViewTab>
								<ViewTab $w={68}>Вид строки</ViewTab>
								<ViewTab $w={26}>Обі</ViewTab>
								<TabArrow>
									<Arrow $dir="left" />
								</TabArrow>
								<TabArrow>
									<Arrow $dir="right" />
								</TabArrow>
							</TabStrip>
						</StructureColumn>
					</TopSplit>
					<BottomPart>
						<SheetTabs>
							<SheetTab $w={146}>Лимитированные затраты</SheetTab>
							<SheetTab $w={101}>Сметные ресурсы</SheetTab>
						</SheetTabs>
						<SheetBody>
							<SideBar>
								<SideButtons>
									<SideButton>{ICONS.plus}</SideButton>
									<SideButton>{ICONS.cross}</SideButton>
								</SideButtons>
								<SideTab $on>Ст</SideTab>
								<SideTab>ТР</SideTab>
								<SideTab>ВР</SideTab>
							</SideBar>
							<RatesFrame>
								<GridMain>
									<GridBody>
										<GridRow $cols={RATE_COLS} $h={48}>
											<HeadCell />
											<HeadCell>№п/п</HeadCell>
											<HeadCell>Переменная</HeadCell>
											<HeadCell>Наименование</HeadCell>
											<StackHead>
												<HeadCell>{"Стандартные\nитоги"}</HeadCell>
												<HeadCell>Уровень цен</HeadCell>
											</StackHead>
											<HeadCell>Тип</HeadCell>
											<HeadCell $bold>
												<Clip>Точность</Clip>
											</HeadCell>
										</GridRow>
										<GridRow $cols={RATE_COLS} $h={16}>
											<RowMark>
												<SmallPointer />
											</RowMark>
											<Cell $lav>ЛС1</Cell>
											<Cell $dark>
												<CornerIcon>
													<SmallNote />
												</CornerIcon>
											</Cell>
											<Cell $lav>
												<BlueBold>Новая локальная смета</BlueBold>
											</Cell>
											<Cell $lav />
											<Cell $lav />
											<Cell $lav />
										</GridRow>
										{RATES.map(([num, code, name]) => (
											<GridRow key={num} $cols={RATE_COLS} $h={16}>
												<RowMark />
												<Cell>{num}</Cell>
												<Cell>
													<Clip>{code}</Clip>
												</Cell>
												<Cell>
													<Clip>{name}</Clip>
												</Cell>
												<Cell $right>0</Cell>
												<Cell>
													<Clip>{code}</Clip>
												</Cell>
												<Cell>
													<Clip>До цен</Clip>
												</Cell>
											</GridRow>
										))}
									</GridBody>
									<VBar>
										<BarButton>
											<Arrow $dir="up" />
										</BarButton>
										<BarThumb $len={37} />
										<BarFill />
										<BarButton>
											<Arrow $dir="down" />
										</BarButton>
									</VBar>
								</GridMain>
								<ScrollH gutter={16} />
							</RatesFrame>
						</SheetBody>
					</BottomPart>
				</RightBody>
			</Win>
		</Desktop>

		<StatusBar>
			<StatusPane $w={86} />
			<StatusPane $w={298}>Копирую данные...</StatusPane>
			<StatusPane />
			<StatusPane $w={30} $center>
				EN
			</StatusPane>
		</StatusBar>

		<Dialog>
			<DialogHead>
				<CloudLogo />
				<DialogTitle>Использование норматива</DialogTitle>
				<RoundButton $shift={-27} $edge={-1}>
					<svg width="16" height="16" viewBox="0 0 16 16">
						<path d="M2 2l12 12M14 2L2 14" stroke="#fff" strokeWidth="2" />
					</svg>
				</RoundButton>
			</DialogHead>
			<DialogText>{"Вы собираетесь использовать нормативы, индексы и\nтекущие цены. Реальная сумма списания может быть\nменьше. Вы уверены, что хотите продолжить?"}</DialogText>
			<TotalRow>
				<span>Максимальная сумма списания:</span>
				<BigNumber $size={26}>4</BigNumber>
				<Rub $size={11.5}>руб.</Rub>
			</TotalRow>
			<Breakdown>
				{[
					["Нормативы", "3", "1 шт."],
					["Текущие цены", "0", "0 шт."],
					["Индексы", "1", "1 шт."],
				].map(([label, value, count]) => (
					<BreakRow key={label}>
						<BreakLabel>{label}</BreakLabel>
						<BreakNumber $size={22}>{value}</BreakNumber>
						<BreakRub $size={10}>руб.</BreakRub>
						<BreakCount>{count}</BreakCount>
					</BreakRow>
				))}
			</Breakdown>
			<CheckLine>
				<CheckBox />
				Больше не показывать информацию о списании денежных средств
			</CheckLine>
			<DialogFoot>
				<RoundButton>
					<svg width="16" height="16" viewBox="0 0 16 16">
						<path d="M2 10l6-6 6 6" fill="none" stroke="#fff" strokeWidth="2.4" />
					</svg>
				</RoundButton>
				<FootGap />
				<DialogButton>ОК</DialogButton>
				<DialogButton>Отменить</DialogButton>
			</DialogFoot>
		</Dialog>
	</Screen>
);

export default App;
